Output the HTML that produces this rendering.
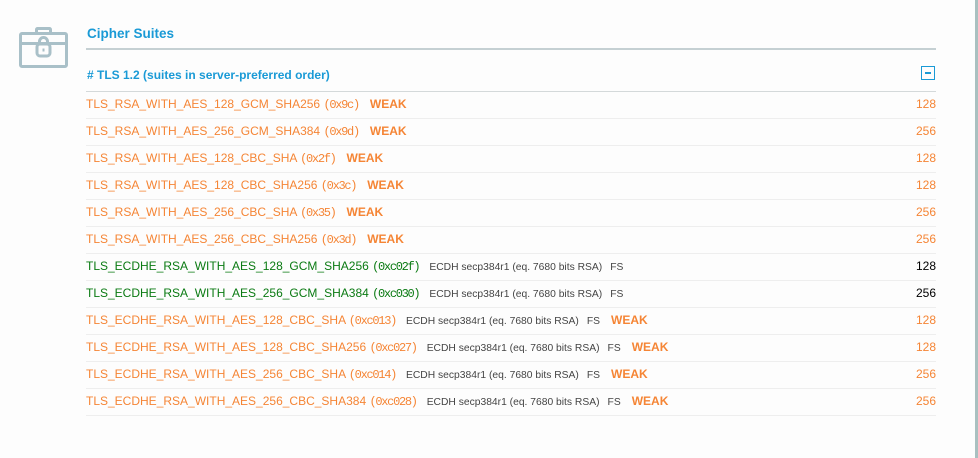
<!DOCTYPE html>
<html><head><style>
body{margin:0;width:978px;height:458px;background:#fdfdfd;font-family:"Liberation Sans",Arial,sans-serif;position:relative;overflow:hidden}
.strip{position:absolute;right:0;top:0;width:3px;height:458px;background:#a9c0c0}
.title{position:absolute;left:87px;top:26px;font-size:13.5px;font-weight:bold;color:#1a9ad6}
.hl{position:absolute;left:86px;top:48px;width:850px;height:2px;background:#c5d0d3}
.sub{position:absolute;left:87px;top:68px;font-size:12px;font-weight:bold;color:#1a9ad6}
.tog{position:absolute;left:921px;top:66px;width:12px;height:12px;border:1px solid #1a9ad6}
.tog:after{content:"";position:absolute;left:3px;top:5px;width:6px;height:2px;background:#1a9ad6}
.l1{position:absolute;left:86px;top:91px;width:850px;height:1px;background:#d4d9da}
.rows{position:absolute;left:86px;top:92px;width:850px}
.r{height:26px;border-bottom:1px solid #eeeeee;position:relative;font-size:12px;line-height:25px;color:#f58535;white-space:nowrap}
.r.g{color:#0a7a12}
.r .c{font-family:"Liberation Mono",monospace;font-size:12px;letter-spacing:-1.3px}
.r .i{font-size:10.3px;color:#444;margin-left:10px}
.r .fs{font-size:10.3px;color:#444;margin-left:8px}
.r .w{font-weight:bold;color:#f58535;margin-left:11px;font-size:12px}
.r .n{position:absolute;right:0;top:0}
.r.g .n{color:#000}
svg{position:absolute;left:0;top:0}
</style></head><body>
<div class="strip"></div>
<svg width="80" height="80" viewBox="0 0 80 80" fill="none" stroke="#a9c0c8" stroke-width="3">
<rect x="20.5" y="33.5" width="46" height="33" rx="1.5"/>
<path d="M20.5 43.5h46"/>
<path d="M36.5 33v-3.5a1 1 0 0 1 1-1h12a1 1 0 0 1 1 1V33"/>
<rect x="37" y="44" width="13" height="12" rx="3" fill="#fdfdfd"/>
<path d="M39.5 44v-2.5a4 4 0 0 1 8 0V44"/>
<path d="M43.5 48.5v3" stroke-width="2"/>
</svg>
<div class="title">Cipher Suites</div>
<div class="hl"></div>
<div class="sub"># TLS 1.2 (suites in server-preferred order)</div>
<div class="tog"></div>
<div class="l1"></div>
<div class="rows">
<div class="r">TLS_RSA_WITH_AES_128_GCM_SHA256 <span class="c">(0x9c)</span><span class="w">WEAK</span><span class="n">128</span></div>
<div class="r">TLS_RSA_WITH_AES_256_GCM_SHA384 <span class="c">(0x9d)</span><span class="w">WEAK</span><span class="n">256</span></div>
<div class="r">TLS_RSA_WITH_AES_128_CBC_SHA <span class="c">(0x2f)</span><span class="w">WEAK</span><span class="n">128</span></div>
<div class="r">TLS_RSA_WITH_AES_128_CBC_SHA256 <span class="c">(0x3c)</span><span class="w">WEAK</span><span class="n">128</span></div>
<div class="r">TLS_RSA_WITH_AES_256_CBC_SHA <span class="c">(0x35)</span><span class="w">WEAK</span><span class="n">256</span></div>
<div class="r">TLS_RSA_WITH_AES_256_CBC_SHA256 <span class="c">(0x3d)</span><span class="w">WEAK</span><span class="n">256</span></div>
<div class="r g">TLS_ECDHE_RSA_WITH_AES_128_GCM_SHA256 <span class="c">(0xc02f)</span><span class="i">ECDH secp384r1 (eq. 7680 bits RSA)</span><span class="fs">FS</span><span class="n">128</span></div>
<div class="r g">TLS_ECDHE_RSA_WITH_AES_256_GCM_SHA384 <span class="c">(0xc030)</span><span class="i">ECDH secp384r1 (eq. 7680 bits RSA)</span><span class="fs">FS</span><span class="n">256</span></div>
<div class="r">TLS_ECDHE_RSA_WITH_AES_128_CBC_SHA <span class="c">(0xc013)</span><span class="i">ECDH secp384r1 (eq. 7680 bits RSA)</span><span class="fs">FS</span><span class="w">WEAK</span><span class="n">128</span></div>
<div class="r">TLS_ECDHE_RSA_WITH_AES_128_CBC_SHA256 <span class="c">(0xc027)</span><span class="i">ECDH secp384r1 (eq. 7680 bits RSA)</span><span class="fs">FS</span><span class="w">WEAK</span><span class="n">128</span></div>
<div class="r">TLS_ECDHE_RSA_WITH_AES_256_CBC_SHA <span class="c">(0xc014)</span><span class="i">ECDH secp384r1 (eq. 7680 bits RSA)</span><span class="fs">FS</span><span class="w">WEAK</span><span class="n">256</span></div>
<div class="r">TLS_ECDHE_RSA_WITH_AES_256_CBC_SHA384 <span class="c">(0xc028)</span><span class="i">ECDH secp384r1 (eq. 7680 bits RSA)</span><span class="fs">FS</span><span class="w">WEAK</span><span class="n">256</span></div>
</div>
</body></html>
